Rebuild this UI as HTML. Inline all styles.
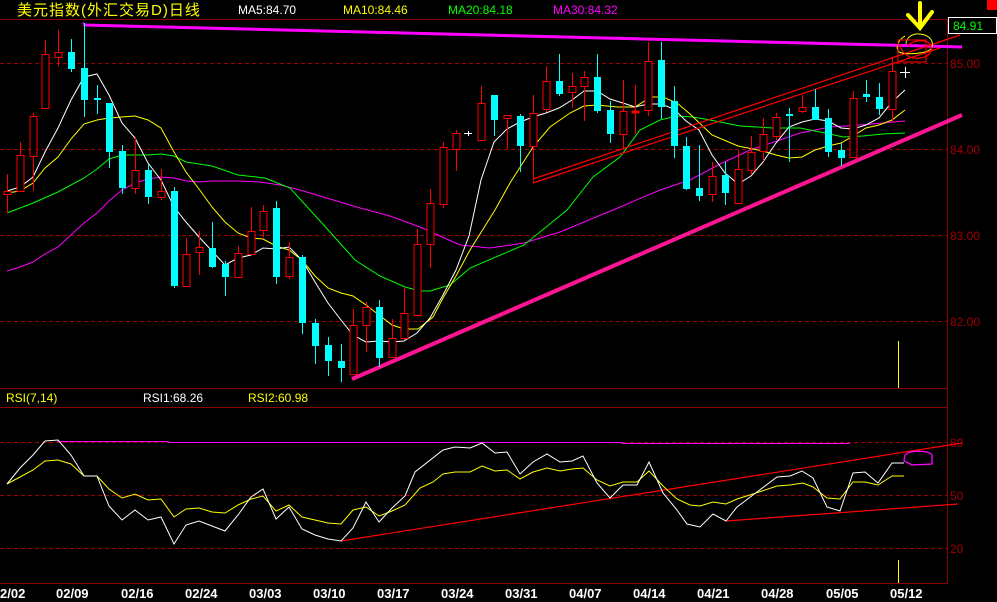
<!DOCTYPE html>
<html><head><meta charset="utf-8">
<style>
html,body{margin:0;padding:0;background:#000;width:997px;height:602px;overflow:hidden}
svg{display:block}
text{font-family:"Liberation Sans","Noto Sans CJK SC",sans-serif}
</style></head><body>
<svg width="997" height="602" viewBox="0 0 997 602" xmlns="http://www.w3.org/2000/svg" shape-rendering="crispEdges">
<rect width="997" height="602" fill="#000"/>
<text x="17" y="15" fill="#ffff00" font-size="15" letter-spacing="1" font-family="'Noto Sans CJK SC',sans-serif">美元指数(外汇交易D)日线</text>
<text x="238" y="14" fill="#fff" font-size="12">MA5:84.70</text>
<text x="343" y="14" fill="#ffff00" font-size="12">MA10:84.46</text>
<text x="448" y="14" fill="#00ff00" font-size="12">MA20:84.18</text>
<text x="553" y="14" fill="#ff00ff" font-size="12">MA30:84.32</text>
<rect x="987" y="0" width="10" height="10" fill="#f00"/>
<g stroke="#8b0000" stroke-width="1" fill="none">
<line x1="0" y1="19.5" x2="948" y2="19.5"/>
<line x1="947.5" y1="19" x2="947.5" y2="583"/>
<line x1="0" y1="388.5" x2="948" y2="388.5"/>
<line x1="0" y1="407.5" x2="948" y2="407.5"/>
<line x1="0" y1="583.5" x2="948" y2="583.5"/>
</g>
<g stroke="#a00000" stroke-width="1" stroke-dasharray="4,3">
<line x1="0" y1="63.5" x2="947" y2="63.5"/>
<line x1="0" y1="149.5" x2="947" y2="149.5"/>
<line x1="0" y1="235.5" x2="947" y2="235.5"/>
<line x1="0" y1="321.5" x2="947" y2="321.5"/>
<line x1="0" y1="442.5" x2="947" y2="442.5"/>
<line x1="0" y1="495.5" x2="947" y2="495.5"/>
<line x1="0" y1="548.5" x2="947" y2="548.5"/>
</g>
<g fill="#a00000" font-size="12">
<text x="950" y="68">85.00</text>
<text x="950" y="154">84.00</text>
<text x="950" y="240">83.00</text>
<text x="950" y="326">82.00</text>
<text x="950" y="447">80</text>
<text x="950" y="500">50</text>
<text x="950" y="553">20</text>
</g>
<rect x="948.5" y="17.5" width="48" height="16" fill="#000" stroke="#fff"/>
<text x="953" y="30" fill="#00ff00" font-size="12">84.91</text>
<polyline points="84,25 124,26 164,27 204,28 244,29 284,30 324,31 364,32 404,33 444,34 484,35 524,36 564,37 604,38 644,39 684,40 724,41 764,42 804,43 844,44 884,45 924,46 962,47" fill="none" stroke="#ff00ff" stroke-width="3" shape-rendering="auto"/>
<text x="81" y="27" fill="#ff00ff" font-size="9">+</text>
<g fill="none" stroke-width="1" shape-rendering="auto">
<polyline stroke="#ff00ff" points="7,271 20,267 33,262 45,254 58,247 71,235 84,223 97,213 109,201 122,190 135,183 148,179 161,177 174,178 186,181 199,182 212,181 238,181 260,182 280,185 300,190 330,199 360,208 390,216 420,227 440,236 460,245 490,248 524,243 560,232 613,210 660,190 690,180 720,164 750,150 780,140 800,133 830,127 860,125 905,121"/>
<polyline stroke="#00ff00" points="7,213 33,203 58,192 84,178 97,169 109,159 122,155 148,155 161,154 174,156 186,162 199,164 212,166 238,175 265,178 290,188 310,210 330,232 355,260 380,276 405,287 420,291 430,291 450,285 470,268 524,245 567,210 593,177 620,157 640,130 660,120 677,116 693,117 710,120 740,126 773,128 800,128 830,134 843,137 863,136 883,134 905,133"/>
<polyline stroke="#ffff00" points="7,193 20,191 33,183 45,168 58,157 71,139 84,124 97,120 109,118 122,117 135,116 148,120 161,128 174,152 186,172 199,189 212,207 225,222 238,233 251,238 263,239 276,246 289,250 302,260 315,276 328,288 341,293 353,296 366,305 379,315 392,325 404,329 418,329 433,317 443,298 456,276 470,250 495,210 510,183 533,147 550,127 570,113 584,106 597,105 617,107 635,107 651,97 663,97 677,103 690,114 712,135 738,146 763,151 776,155 789,158 802,157 815,150 828,146 841,143 853,136 866,128 879,125 892,120 905,110"/>
<polyline stroke="#ffffff" points="7,191 20,187 33,177 45,152 58,128 71,100 84,77 97,74 109,95 122,123 135,138 148,163 161,180 174,207 186,222 199,237 212,251 225,265 238,258 251,255 263,248 276,249 289,247 302,260 315,282 328,303 341,320 353,335 366,342 379,341 392,342 404,341 417,333 430,318 443,295 456,270 469,236 481,180 494,142 507,129 520,122 533,117 546,113 559,108 572,100 584,91 597,91 610,99 623,103 635,107 648,104 661,104 674,109 686,121 699,130 712,155 725,173 738,184 751,176 763,162 776,143 789,127 802,122 815,119 828,121 841,128 853,129 866,125 879,118 892,102 905,90"/>
</g>
<g shape-rendering="auto">
<line x1="533" y1="183" x2="940" y2="48" stroke="#ff0000" stroke-width="1.2"/>
<line x1="533" y1="179" x2="960" y2="35" stroke="#ff0000" stroke-width="1.2"/>
<line x1="352" y1="379" x2="962" y2="115" stroke="#ff1493" stroke-width="4"/>
</g>
<g stroke="#ff0000" stroke-width="1" fill="#000">
<path d="M7.5 174V213M20.5 142V191M33.5 113V191M45.5 40V108M58.5 30V66M135.5 137V194M161.5 169V200M186.5 238V286M199.5 231V275M238.5 246V277M251.5 207V254M263.5 205V237M289.5 242V279M353.5 309V374M366.5 302V352M392.5 319V357M404.5 288V340M417.5 229V315M430.5 189V268M443.5 142V208M456.5 130V171M481.5 86V140M507.5 115V149M533.5 95V183M546.5 66V112M572.5 73V108M584.5 71V121M623.5 80V149M635.5 85V134M648.5 42V116M712.5 162V202M738.5 150V203M751.5 136V175M763.5 118V161M776.5 113V140M802.5 95V113M853.5 91V157M892.5 58V123"/>
<rect x="4" y="191.5" width="7" height="3"/>
<rect x="17" y="155.5" width="7" height="36"/>
<rect x="30" y="116.5" width="7" height="40"/>
<rect x="42" y="54.5" width="7" height="54"/>
<rect x="55" y="52.5" width="7" height="5"/>
<rect x="132" y="170.5" width="7" height="18"/>
<rect x="158" y="191.5" width="7" height="6"/>
<rect x="183" y="254.5" width="7" height="32"/>
<rect x="196" y="247.5" width="7" height="5"/>
<rect x="235" y="253.5" width="7" height="24"/>
<rect x="248" y="231.5" width="7" height="23"/>
<rect x="260" y="211.5" width="7" height="19"/>
<rect x="286" y="257.5" width="7" height="19"/>
<rect x="350" y="325.5" width="7" height="49"/>
<rect x="363" y="307.5" width="7" height="18"/>
<rect x="389" y="338.5" width="7" height="19"/>
<rect x="401" y="313.5" width="7" height="25"/>
<rect x="414" y="244.5" width="7" height="71"/>
<rect x="427" y="203.5" width="7" height="41"/>
<rect x="440" y="147.5" width="7" height="57"/>
<rect x="453" y="133.5" width="7" height="16"/>
<rect x="478" y="103.5" width="7" height="37"/>
<rect x="504" y="115.5" width="7" height="3"/>
<rect x="530" y="113.5" width="7" height="33"/>
<rect x="543" y="81.5" width="7" height="28"/>
<rect x="569" y="86.5" width="7" height="6"/>
<rect x="581" y="77.5" width="7" height="9"/>
<rect x="620" y="111.5" width="7" height="23"/>
<rect x="632" y="111" width="7" height="2" fill="#ff0000"/>
<rect x="645" y="61.5" width="7" height="49"/>
<rect x="709" y="176.5" width="7" height="18"/>
<rect x="735" y="169.5" width="7" height="34"/>
<rect x="748" y="152.5" width="7" height="18"/>
<rect x="760" y="134.5" width="7" height="17"/>
<rect x="773" y="117.5" width="7" height="19"/>
<rect x="799" y="107.5" width="7" height="4"/>
<rect x="850" y="98.5" width="7" height="59"/>
<rect x="889" y="71.5" width="7" height="38"/>
</g>
<g stroke="#00ffff" stroke-width="1" fill="#00ffff">
<path d="M71.5 39V72M84.5 23V117M97.5 85V114M109.5 103V168M122.5 145V194M148.5 164V204M174.5 187V288M212.5 222V268M225.5 261V296M276.5 201V284M302.5 255V334M315.5 319V364M328.5 337V376M341.5 344V382M379.5 300V367M494.5 95V136M520.5 114V172M559.5 54V96M597.5 54V113M610.5 101V143M661.5 42V119M674.5 86V158M686.5 137V190M699.5 145V201M725.5 162V205M789.5 108V162M815.5 89V120M828.5 109V157M841.5 143V166M866.5 80V102M879.5 83V115"/>
<g stroke="none">
<rect x="68" y="52" width="7" height="17"/>
<rect x="81" y="68" width="7" height="32"/>
<rect x="94" y="98" width="7" height="2"/>
<rect x="106" y="103" width="7" height="49"/>
<rect x="119" y="151" width="7" height="37"/>
<rect x="145" y="170" width="7" height="27"/>
<rect x="171" y="191" width="7" height="95"/>
<rect x="209" y="248" width="7" height="19"/>
<rect x="222" y="264" width="7" height="13"/>
<rect x="273" y="208" width="7" height="69"/>
<rect x="299" y="257" width="7" height="66"/>
<rect x="312" y="323" width="7" height="23"/>
<rect x="325" y="345" width="7" height="16"/>
<rect x="338" y="361" width="7" height="7"/>
<rect x="376" y="307" width="7" height="51"/>
<rect x="491" y="95" width="7" height="25"/>
<rect x="517" y="116" width="7" height="30"/>
<rect x="556" y="81" width="7" height="13"/>
<rect x="594" y="77" width="7" height="34"/>
<rect x="607" y="110" width="7" height="24"/>
<rect x="658" y="60" width="7" height="47"/>
<rect x="671" y="101" width="7" height="45"/>
<rect x="683" y="146" width="7" height="43"/>
<rect x="696" y="188" width="7" height="8"/>
<rect x="722" y="175" width="7" height="18"/>
<rect x="786" y="114" width="7" height="2"/>
<rect x="812" y="107" width="7" height="13"/>
<rect x="825" y="118" width="7" height="34"/>
<rect x="838" y="150" width="7" height="8"/>
<rect x="863" y="94" width="7" height="3"/>
<rect x="876" y="97" width="7" height="12"/>
</g>
</g>
<g stroke="#fff" stroke-width="1">
<path d="M464 133.5H472M468.5 131V136M900 72.5H910M905.5 67V78"/>
</g>
<line x1="898.5" y1="341" x2="898.5" y2="388" stroke="#ffff00"/>
<line x1="898.5" y1="560" x2="898.5" y2="583" stroke="#ffff00"/>
<g fill="none" shape-rendering="auto">
<path d="M920 3V27M908 15L920 28L932 12" stroke="#ffff00" stroke-width="4" stroke-linecap="round"/>
<path d="M905 36C898 40 895 48 899 52C905 55 925 54 931 49C935 42 930 35 920 34C912 33 906 38 906 44" stroke="#ffff00" stroke-width="1"/>
<path d="M900 44C900 52 910 60 920 58C930 57 934 50 930 44C926 39 912 40 908 46" stroke="#ff0000" stroke-width="1.2"/>
<rect x="898" y="40" width="28" height="22" stroke="#ff0000" stroke-width="1"/>
</g>
<text x="6" y="402" fill="#ffff00" font-size="12">RSI(7,14)</text>
<text x="143" y="402" fill="#fff" font-size="12">RSI1:68.26</text>
<text x="248" y="402" fill="#ffff00" font-size="12">RSI2:60.98</text>
<g fill="none" shape-rendering="auto">
<polyline stroke="#ff00ff" stroke-width="1" points="57,441.5 168,441.5 168,442.5 622,442.5 622,443.5 850,443.5"/>
<line x1="341" y1="541" x2="962" y2="443" stroke="#ff0000" stroke-width="1.2"/>
<line x1="726" y1="521" x2="958" y2="504" stroke="#ff0000" stroke-width="1.2"/>
<path d="M905 455C910 450 928 450 932 455L932 464L912 465L904 461Z" stroke="#ff00ff" stroke-width="1.3"/>
<polyline stroke="#ffff00" stroke-width="1" points="7,484 20,477 33,470 45,461 58,460 71,464 84,476 97,476 109,489 122,498 135,494 148,500 161,499 174,517 186,509 199,508 212,512 225,513 238,505 251,499 263,496 276,511 289,505 302,517 315,520 328,523 341,524 353,510 366,507 379,516 392,511 405,505 420,488 433,482 443,474 455,472 470,472 482,466 495,471 507,470 520,479 533,472 547,468 560,471 572,469 583,468 597,480 610,486 623,482 637,482 649,471 663,486 677,499 690,505 700,506 713,502 726,504 737,499 753,494 777,486 790,485 803,483 813,487 827,498 840,499 853,482 865,482 878,485 892,476 904,476"/>
<polyline stroke="#ffffff" stroke-width="1" points="7,484 20,468 33,455 45,441 58,440 71,455 84,476 97,476 109,506 122,520 135,510 148,520 161,517 174,544 186,525 199,521 212,526 225,531 238,515 251,497 263,489 276,519 289,507 302,529 315,535 328,539 341,541 353,528 366,502 379,522 392,508 405,496 415,472 443,450 455,447 470,448 482,443 495,453 507,452 520,474 533,462 547,454 560,462 572,461 583,456 597,483 610,498 623,485 637,485 649,462 663,493 677,510 687,524 700,527 713,514 726,521 737,507 753,495 777,477 790,476 802,471 813,478 827,507 840,511 853,473 865,472 878,483 892,463 904,463"/>
</g>
<g fill="#fff" font-size="13" font-weight="bold">
<text x="0" y="598" font-family="'Liberation Mono',monospace">2/02</text>
<text x="56" y="598" font-family="'Liberation Mono',monospace">02/09</text>
<text x="121" y="598" font-family="'Liberation Mono',monospace">02/16</text>
<text x="185" y="598" font-family="'Liberation Mono',monospace">02/24</text>
<text x="249" y="598" font-family="'Liberation Mono',monospace">03/03</text>
<text x="313" y="598" font-family="'Liberation Mono',monospace">03/10</text>
<text x="377" y="598" font-family="'Liberation Mono',monospace">03/17</text>
<text x="441" y="598" font-family="'Liberation Mono',monospace">03/24</text>
<text x="505" y="598" font-family="'Liberation Mono',monospace">03/31</text>
<text x="569" y="598" font-family="'Liberation Mono',monospace">04/07</text>
<text x="633" y="598" font-family="'Liberation Mono',monospace">04/14</text>
<text x="697" y="598" font-family="'Liberation Mono',monospace">04/21</text>
<text x="761" y="598" font-family="'Liberation Mono',monospace">04/28</text>
<text x="826" y="598" font-family="'Liberation Mono',monospace">05/05</text>
<text x="890" y="598" font-family="'Liberation Mono',monospace">05/12</text>
</g>
</svg>
</body></html>
